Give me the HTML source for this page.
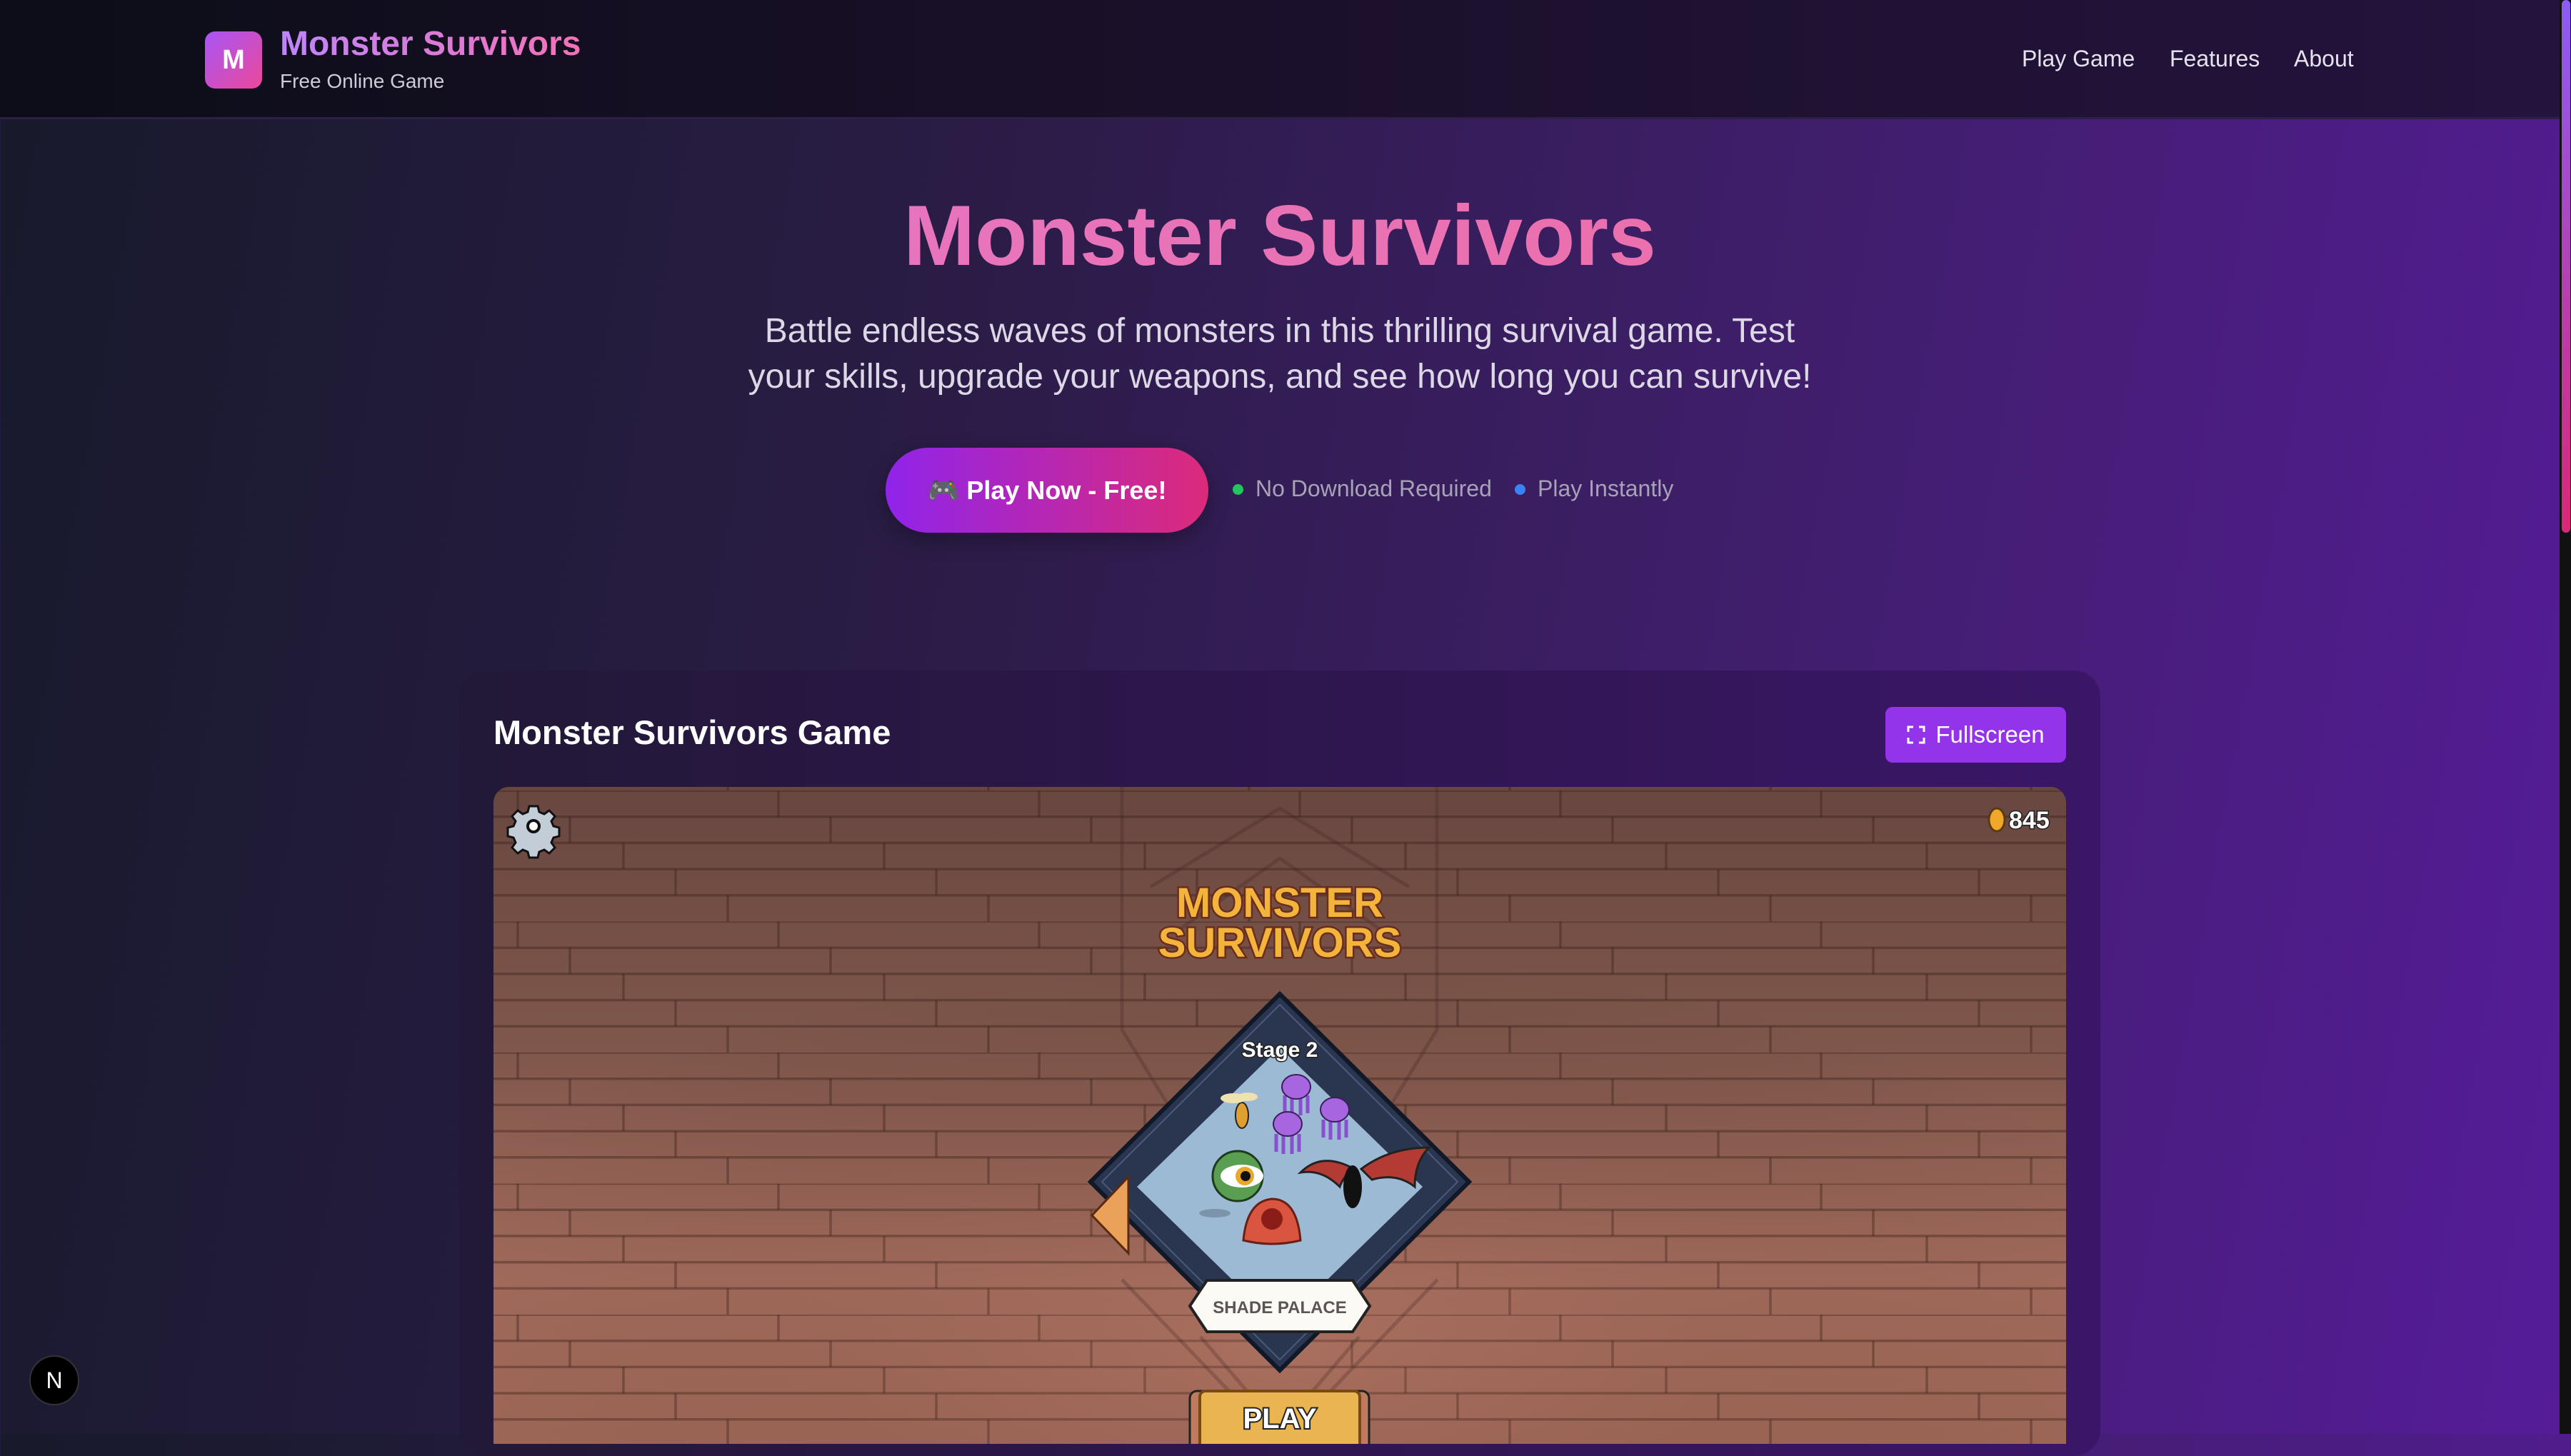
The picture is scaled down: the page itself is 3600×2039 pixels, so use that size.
<!DOCTYPE html>
<html><head><meta charset="utf-8"><style>
*{margin:0;padding:0;box-sizing:border-box}
body{width:3600px;height:2008px;overflow:hidden;font-family:"Liberation Sans",sans-serif;background:linear-gradient(100deg,#171a2b 0%,#2a1c45 35%,#3f1e6a 65%,#561c99 100%);position:relative;color:#fff}
.hdr{position:absolute;left:0;top:0;width:3584px;height:167px;background:linear-gradient(90deg,#0c0d18 0%,#1a1029 45%,#24133d 100%);border-bottom:3px solid #2e1f47}
.logo{position:absolute;left:287px;top:44px;width:80px;height:80px;border-radius:14px;background:linear-gradient(135deg,#a855f7,#ec4899);font-weight:bold;font-size:38px;display:flex;align-items:center;justify-content:center}
.t1{position:absolute;left:392px;top:34px;font-size:48px;font-weight:bold;background:linear-gradient(90deg,#c084fc,#f472b6);-webkit-background-clip:text;color:transparent}
.t2{position:absolute;left:392px;top:98px;font-size:28px;color:#cfcbd8}
.nav{position:absolute;top:64px;font-size:32px;color:#e5e2ee}
h1{position:absolute;left:0;width:3584px;top:255px;text-align:center;font-size:120px;font-weight:bold;background:linear-gradient(90deg,#e27ad0,#f06a9a);-webkit-background-clip:text;color:transparent;line-height:150px}
.sub{position:absolute;left:0;width:3584px;top:432px;text-align:center;font-size:48px;line-height:64px;color:#dcd8e6}
.btn{position:absolute;left:1240px;top:627px;width:452px;height:119px;border-radius:60px;background:linear-gradient(90deg,#9024ea,#dc2a7a);font-weight:bold;font-size:36px;display:flex;align-items:center;justify-content:center;box-shadow:0 10px 30px rgba(0,0,0,.3)}
.bd{position:absolute;top:666px;font-size:32px;color:#a7a2b8}
.dot{position:absolute;width:15px;height:15px;border-radius:50%;top:678px}
.card{position:absolute;left:643px;top:939px;width:2298px;height:1100px;border-radius:37px;background:linear-gradient(90deg,#221837,#2f1650 55%,#3b1668);}
.ct{position:absolute;left:691px;top:998px;font-size:47px;font-weight:bold}
.fs{position:absolute;left:2640px;top:990px;width:253px;height:78px;border-radius:10px;background:#9333ea;font-size:33px;display:flex;align-items:center;justify-content:center;gap:14px}
.game{position:absolute;left:691px;top:1102px;width:2202px;height:920px;border-radius:22px 22px 0 0;overflow:hidden;
background:linear-gradient(180deg,#684740 0%,#80574b 40%,#a46c5d 75%,#a06858 100%)}
.sb{position:absolute;left:3584px;top:0;width:16px;height:2008px;background:#111}
.sbt{position:absolute;left:3587px;top:0;width:12px;height:746px;border-radius:6px;background:linear-gradient(180deg,#8b5cf6,#db2777)}
.n{position:absolute;left:41px;top:1898px;width:70px;height:70px;border-radius:50%;background:#000;border:2px solid #333;display:flex;align-items:center;justify-content:center;font-size:32px}
</style></head><body>
<div class="hdr"></div>
<div class="logo">M</div>
<div class="t1">Monster Survivors</div>
<div class="t2">Free Online Game</div>
<div class="nav" style="left:2831px">Play Game</div>
<div class="nav" style="left:3038px">Features</div>
<div class="nav" style="left:3212px">About</div>
<h1>Monster Survivors</h1>
<div class="sub">Battle endless waves of monsters in this thrilling survival game. Test<br>your skills, upgrade your weapons, and see how long you can survive!</div>
<div class="btn">🎮 Play Now - Free!</div>
<div class="dot" style="left:1726px;background:#22c55e"></div>
<div class="bd" style="left:1758px">No Download Required</div>
<div class="dot" style="left:2121px;background:#3b82f6"></div>
<div class="bd" style="left:2153px">Play Instantly</div>
<div class="card"></div>
<div class="ct">Monster Survivors Game</div>
<div class="fs"><svg width="26" height="26" viewBox="0 0 26 26" fill="none" stroke="#fff" stroke-width="3"><path d="M2 9V2h7M17 2h7v7M24 17v7h-7M9 24H2v-7"/></svg>Fullscreen</div>
<div class="game">
<svg width="2202" height="920" viewBox="0 0 2202 920" style="position:absolute;left:0;top:0">
<defs>
<pattern id="br" width="365" height="183.5" patternUnits="userSpaceOnUse" x="0" y="5">
<g stroke="rgba(55,28,22,.38)" stroke-width="3.5" fill="none">
<path d="M0 0H365M0 36.7H365M0 73.4H365M0 110.1H365M0 146.8H365"/>
<path d="M34 0V36.7M107 36.7V73.4M182 73.4V110.1M255 110.1V146.8M328 146.8V183.5"/>
</g></pattern>
<radialGradient id="vg" cx="0.5" cy="0.85" r="0.6"><stop offset="0" stop-color="rgba(200,130,110,.2)"/><stop offset="1" stop-color="rgba(0,0,0,0)"/></radialGradient>
</defs>
<rect width="2202" height="920" fill="url(#br)"/>
<rect width="2202" height="920" fill="url(#vg)"/>
<g fill="none" stroke="rgba(60,30,30,.25)" stroke-width="5">
<path d="M880 0V340L1101 700L1321 340V0"/>
<path d="M920 140L1101 30L1282 140"/>
<path d="M960 200L1101 100L1242 200"/>
<path d="M880 690L1101 920L1322 690"/>
<path d="M990 770L1101 900L1212 770"/>
</g>
<text x="1101" y="182" text-anchor="middle" font-family="Liberation Sans" font-weight="bold" font-size="58" fill="#f3b43c" stroke="#6b2c1a" stroke-width="5" paint-order="stroke">MONSTER</text>
<text x="1101" y="238" text-anchor="middle" font-family="Liberation Sans" font-weight="bold" font-size="58" fill="#f3b43c" stroke="#6b2c1a" stroke-width="5" paint-order="stroke">SURVIVORS</text>
<polygon points="1101,290 1366,553 1101,817 836,553" fill="#2a3550" stroke="#111827" stroke-width="6"/>
<polygon points="1101,305 1350,553 1101,802 852,553" fill="none" stroke="#4a5a7a" stroke-width="2"/>
<polygon points="1101,365 1301,560 1101,755 901,560" fill="#9cbad4"/>
<text x="1101" y="378" text-anchor="middle" font-family="Liberation Sans" font-weight="bold" font-size="30" fill="#fff" stroke="#222" stroke-width="3" paint-order="stroke">Stage 2</text>
<g fill="#a865e0" stroke="#3a1d5a" stroke-width="2">
<path d="M1108 432v25M1118 432v28M1130 432v28M1140 432v25M1162 466v25M1172 466v28M1184 466v28M1194 466v25M1096 486v25M1106 486v28M1118 486v28M1128 486v25" stroke="#8a4ed0" stroke-width="5" fill="none"/>
<ellipse cx="1124" cy="420" rx="20" ry="17"/><ellipse cx="1178" cy="452" rx="20" ry="17"/><ellipse cx="1112" cy="472" rx="20" ry="17"/>
</g>
<ellipse cx="1048" cy="460" rx="9" ry="18" fill="#e0a030" stroke="#222" stroke-width="2"/>
<ellipse cx="1036" cy="436" rx="18" ry="7" fill="#eee2b0"/><ellipse cx="1056" cy="434" rx="14" ry="6" fill="#eee2b0"/>
<circle cx="1042" cy="545" r="35" fill="#5a9e52" stroke="#1e3a1c" stroke-width="3"/>
<ellipse cx="1048" cy="545" rx="30" ry="16" fill="#fff"/><circle cx="1052" cy="545" r="13" fill="#e8a82a"/><circle cx="1053" cy="545" r="7" fill="#111"/>
<ellipse cx="1010" cy="597" rx="22" ry="6" fill="rgba(0,0,0,.2)"/>
<path d="M1050 635q5-55 40-58 35 0 40 58q-40 10-80 0z" fill="#d9553f" stroke="#6b1f14" stroke-width="3"/>
<circle cx="1090" cy="605" r="15" fill="#8a1d18"/>
<path d="M1130 540q30-30 75-5q-15 10-20 25q-25-25-55-20zM1215 535q40-30 95-30q-20 20-20 55q-25-20-60-10z" fill="#b43a34" stroke="#222" stroke-width="3"/>
<ellipse cx="1203" cy="560" rx="13" ry="30" fill="#111"/>
<path d="M889 546L838 600L889 653Z" fill="#eaa25a" stroke="#5a2a10" stroke-width="3"/>
<path d="M975 727l24-36h204l24 36l-24 36h-204z" fill="#fbfaf4" stroke="#222" stroke-width="4"/>
<text x="1101" y="737" text-anchor="middle" font-family="Liberation Sans" font-weight="bold" font-size="24" fill="#5d5454">SHADE PALACE</text>
<rect x="975" y="846" width="251" height="90" rx="10" fill="#c07a60" stroke="#222" stroke-width="3"/>
<rect x="989" y="846" width="224" height="90" rx="8" fill="#eab550" stroke="#7a4a15" stroke-width="4"/>
<text x="1101" y="898" text-anchor="middle" font-family="Liberation Sans" font-weight="bold" font-size="40" fill="#fff" stroke="#222" stroke-width="4" paint-order="stroke">PLAY</text>
<g transform="translate(56,55)"><g fill="#c3cdd8" stroke="#111" stroke-width="3">
<path d="M-6-28h12l2 8 7 3 7-5 8 8-5 7 3 7 8 2v12l-8 2-3 7 5 7-8 8-7-5-7 3-2 8h-12l-2-8-7-3-7 5-8-8 5-7-3-7-8-2v-12l8-2 3-7-5-7 8-8 7 5 7-3z"/></g>
<circle r="8" fill="#fff" stroke="#111" stroke-width="4"/></g>
<ellipse cx="2105" cy="46" rx="11" ry="16" fill="#f0a82a" stroke="#5a3a10" stroke-width="3"/>
<text x="2122" y="58" font-family="Liberation Sans" font-weight="bold" font-size="34" fill="#fff" stroke="#222" stroke-width="3" paint-order="stroke">845</text>
</svg>
</div>
<div class="n">N</div>
<div class="sb"></div><div class="sbt"></div>
</body></html>
